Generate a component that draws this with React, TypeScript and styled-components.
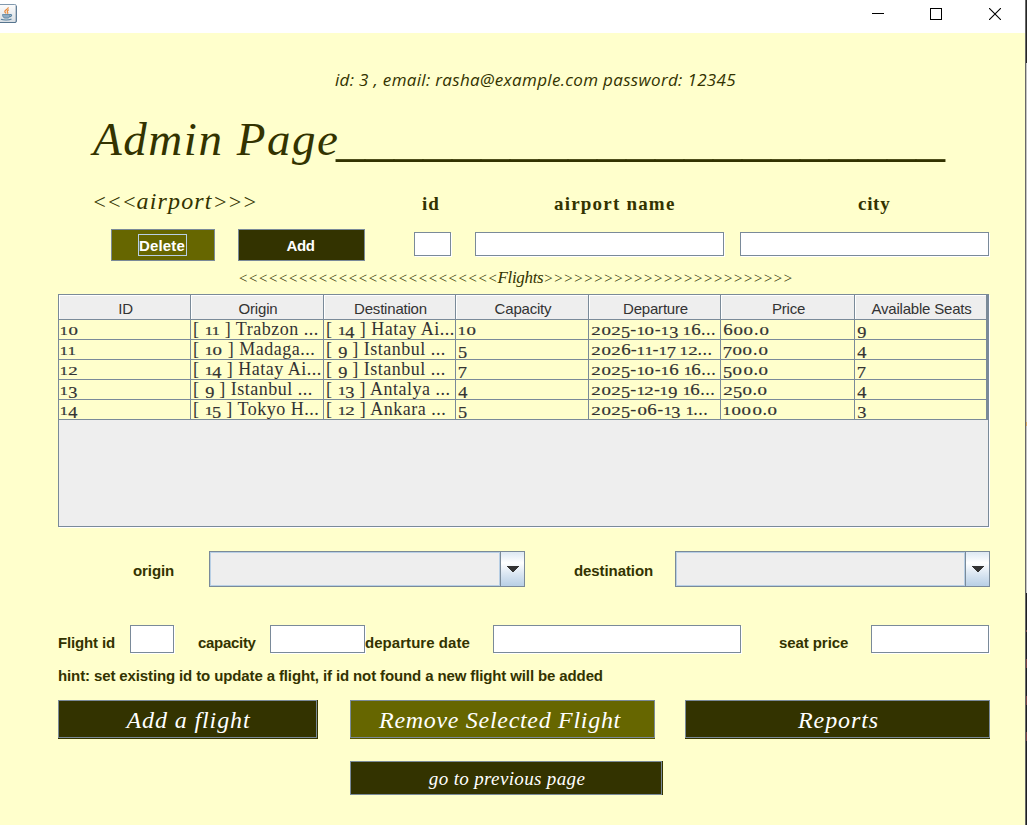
import React from "react";
import styled, { createGlobalStyle } from "styled-components";

const line = "#7a8a99";
const ink = "#333300";
const cream = "#ffffcc";
const serif = '"Liberation Serif", serif';
const sans = '"Liberation Sans", sans-serif';

const GlobalStyle = createGlobalStyle`
  * { box-sizing: border-box; }
  body { margin: 0; background: ${cream}; overflow: hidden; }
`;

const Screen = styled.div`
  display: flex;
  width: 1027px;
  height: 825px;
`;

const Window = styled.div`
  width: 1025px;
  background: ${cream};
  color: ${ink};
  font-family: ${serif};
  display: flex;
  flex-direction: column;
`;

const Backdrop = styled.div`
  width: 2px;
  border-left: 1px solid #686868;
  background: linear-gradient(
    #262626 0 63px, #c4c4c4 63px 422px, #d8a860 422px 426px, #c4c4c4 426px 593px,
    #1e1f22 593px 630px, #7a4040 630px 632px, #1e1f22 632px 659px, #7a4040 659px 668px,
    #1e1f22 668px 696px, #7a4040 696px 705px, #1e1f22 705px 732px, #7a4040 732px 741px, #1e1f22 741px
  );
`;

const TitleBar = styled.header`
  display: flex;
  align-items: flex-start;
  justify-content: space-between;
  height: 33px;
  flex: none;
  background: #fff;
`;

const WindowControls = styled.div`
  display: flex;
  gap: 46px;
  padding: 8px 24px 0 0;

  svg:last-child { margin-left: 1px; }
`;

const AppIcon = styled.svg`
  margin-top: 4px;
`;

const Row = styled.div<{ $h: number; $mt?: number; $pt?: number }>`
  display: flex;
  align-items: center;
  flex: none;
  height: ${(p) => p.$h}px;
  margin-top: ${(p) => p.$mt ?? 0}px;
  padding-top: ${(p) => p.$pt ?? 0}px;
`;

const UserInfo = styled.p`
  margin: 0 0 0 335px;
  font: italic 17px/20px "Open Sans", sans-serif;
  letter-spacing: 0.33px;
  white-space: pre;
`;

const Title = styled.h1`
  margin: 0 0 0 93px;
  font: italic 47px/50px ${serif};
  letter-spacing: 1.55px;
  white-space: pre;
`;

const Rule = styled.span`
  font-size: 58px;
  line-height: 0;
  letter-spacing: 0;
  margin-left: -3.5px;
`;

const AirportTitle = styled.h2`
  width: 329px;
  padding-left: 92px;
  margin: 0 0 2px;
  font: italic 24px/28px ${serif};
  letter-spacing: 1.15px;
  white-space: pre;
`;

const Arrows = styled.span<{ $size: number; $spacing: number }>`
  font-size: ${(p) => p.$size}px;
  letter-spacing: ${(p) => p.$spacing}px;
`;

const ColumnLabel = styled.label<{ $w: number; $ls: number }>`
  width: ${(p) => p.$w}px;
  padding-top: 3px;
  font: bold 19px/24px ${serif};
  letter-spacing: ${(p) => p.$ls}px;
  white-space: nowrap;
`;

const ColumnSpacer = styled.span`
  width: 93px;
`;

const SmallButton = styled.button<{ $w: number; $ml: number; $active?: boolean }>`
  width: ${(p) => p.$w}px;
  height: 32px;
  margin: 0 0 0 ${(p) => p.$ml}px;
  padding: ${(p) => (p.$active ? 0 : 2)}px 2px 0 0;
  border: 1px solid ${line};
  background: ${(p) => (p.$active ? "#666600" : ink)};
  color: #fff;
  font: bold 15px/20px ${sans};
  letter-spacing: ${(p) => (p.$active ? 0.2 : -0.4)}px;
`;

const FocusRing = styled.span`
  display: inline-block;
  width: 49px;
  height: 22px;
  padding-top: 1px;
  border: 1px solid #b8cfe5;
  white-space: nowrap;
`;

const Field = styled.input<{ $w: number; $h: number; $ml: number }>`
  width: ${(p) => p.$w}px;
  height: ${(p) => p.$h}px;
  flex: none;
  margin: 0 0 ${(p) => (p.$h === 24 ? 2 : 0)}px ${(p) => p.$ml}px;
  padding: 0 2px;
  border: 1px solid ${line};
  border-radius: 0;
  background: #fff;
  box-shadow: 1px 1px 0 #fff;
`;

const FlightsTitle = styled.h2`
  margin: 0 0 0 238px;
  font: italic 17px/20px ${serif};
  letter-spacing: -0.35px;
  white-space: pre;
`;

const TablePane = styled.div`
  width: 931px;
  height: 233px;
  flex: none;
  margin-left: 58px;
  border: 1px solid ${line};
  background: #eee;
  box-shadow: 1px 1px 0 #fff;
`;

const Grid = styled.div`
  display: grid;
  grid-template-columns: 132px 133px 132px 133px 132px 134px 132px;
  width: 929px;
  border-right: 1px solid ${line};
`;

const HeadCell = styled.div`
  height: 25px;
  border-right: 1px solid ${line};
  border-bottom: 1px solid ${line};
  box-shadow: inset 1px 1px 0 #fff;
  padding: 5px 0 0 2px;
  text-align: center;
  color: #333;
  font: 15px/18px ${sans};
  letter-spacing: -0.2px;
`;

const Cell = styled.div<{ $first?: boolean }>`
  height: 20px;
  padding-left: ${(p) => (p.$first ? 1 : 2)}px;
  border-right: 1px solid ${line};
  border-bottom: 1px solid ${line};
  background: ${cream};
  color: #333;
  font: 18px/19px ${serif};
  letter-spacing: 0.5px;
  white-space: pre;
`;

const Numeral = styled.span<{ $w: number; $size: number; $drop: number; $stretch: number }>`
  display: inline-block;
  width: ${(p) => p.$w}px;
  font-size: ${(p) => p.$size}px;
  line-height: 1;
  letter-spacing: 0;
  text-align: center;
  transform: translateY(${(p) => p.$drop}px) scaleX(${(p) => p.$stretch});
  -webkit-text-stroke: 0.2px #333;
`;

const FormLabel = styled.label<{ $ml: number; $w: number; $ls?: number; $pt?: number }>`
  width: ${(p) => p.$w}px;
  flex: none;
  margin-left: ${(p) => p.$ml}px;
  padding-top: ${(p) => p.$pt ?? 7}px;
  font: bold 15px/18px ${sans};
  letter-spacing: ${(p) => p.$ls ?? -0.08}px;
  white-space: nowrap;
`;

const Combo = styled.div<{ $w: number }>`
  display: flex;
  width: ${(p) => p.$w}px;
  height: 36px;
  flex: none;
  border: 1px solid ${line};
`;

const ComboValue = styled.div`
  flex: 1;
  border: 1px solid #b8cfe5;
  background: #eee;
`;

const ComboArrow = styled.div`
  display: flex;
  align-items: center;
  justify-content: center;
  width: 24px;
  border-left: 1px solid ${line};
  background: linear-gradient(#dde8f3 0%, #fff 32%, #dde8f3 62%, #b8cfe5 100%);
`;

const Hint = styled.p`
  margin: 0 0 2px 58px;
  font: bold 15px/18px ${sans};
  letter-spacing: -0.12px;
  white-space: nowrap;
`;

const ActionButton = styled.button<{
  $w: number; $h: number; $ml: number; $size: number; $ls: number; $active?: boolean;
  $right?: boolean; $bottom?: boolean; $shift?: number;
}>`
  width: ${(p) => p.$w}px;
  height: ${(p) => p.$h}px;
  flex: none;
  margin: 0 0 0 ${(p) => p.$ml}px;
  padding: 2px ${(p) => Math.max(0, -(p.$shift ?? 2))}px 0 ${(p) => Math.max(0, p.$shift ?? 2)}px;
  border: 1px solid ${line};
  background: ${(p) => (p.$active ? "#666600" : ink)};
  box-shadow:
    ${(p) => (p.$right ? 1 : 0)}px 0 0 ${(p) => (p.$active ? "#555500" : ink)},
    ${(p) => (p.$right ? 1 : 0)}px ${(p) => (p.$bottom ? 1 : 0)}px 0 ${(p) => (p.$active ? "#555500" : ink)},
    0 ${(p) => (p.$bottom ? 1 : 0)}px 0 ${(p) => (p.$active ? "#555500" : ink)};
  color: #fff;
  font: italic ${(p) => p.$size}px/28px ${serif};
  letter-spacing: ${(p) => p.$ls}px;
  white-space: nowrap;
`;

const digitWidths: Record<string, number> = {
  "0": 10.6, "1": 7.6, "2": 9.7, "3": 9.5, "4": 9.7, "5": 9.2, "6": 9.9, "7": 8.7, "8": 10, "9": 9.7,
};

/* Renders digits as old-style figures: 0-2 at x-height, 3/4/5/7/9 descending. */
function OldStyle({ text }: { text: string }) {
  return (
    <>
      {text.split(/(\d)/).map((part, i) => {
        if (!(part in digitWidths)) return part;
        const small = "012".includes(part);
        const descends = "34579".includes(part);
        return (
          <Numeral
            key={i}
            $w={digitWidths[part]}
            $size={small ? 13 : descends ? 17 : 17.5}
            $drop={descends ? 2.5 : 0}
            $stretch={part === "1" ? 1.25 : small ? 1.45 : 1.08}
          >
            {part}
          </Numeral>
        );
      })}
    </>
  );
}

const headers = ["ID", "Origin", "Destination", "Capacity", "Departure", "Price", "Available Seats"];
const flights = [
  ["10", "[ 11 ] Trabzon ...", "[ 14 ] Hatay Ai...", "10", "2025-10-13 16...", "600.0", "9"],
  ["11", "[ 10 ] Madaga...", "[ 9 ] Istanbul ...", "5", "2026-11-17 12...", "700.0", "4"],
  ["12", "[ 14 ] Hatay Ai...", "[ 9 ] Istanbul ...", "7", "2025-10-16 16...", "500.0", "7"],
  ["13", "[ 9 ] Istanbul ...", "[ 13 ] Antalya ...", "4", "2025-12-19 16...", "250.0", "4"],
  ["14", "[ 15 ] Tokyo H...", "[ 12 ] Ankara ...", "5", "2025-06-13 1...", "1000.0", "3"],
];

function JavaIcon() {
  return (
    <AppIcon width="17" height="19" viewBox="0 0 17 19">
      <defs>
        <linearGradient id="tile" x1="0" y1="0" x2="0" y2="1">
          <stop offset="0" stopColor="#fdfdfd" />
          <stop offset="1" stopColor="#d8dde2" />
        </linearGradient>
      </defs>
      <rect x="-3" y="0.5" width="19.3" height="18" rx="1.5" fill="url(#tile)" stroke="#8199ae" />
      <path d="M16.3 2v15.500q0 1-1 1H0" fill="none" stroke="#55748e" />
      <path d="M8.200 3.200c.6 1.800-3.400 2.600-3.400 4.300 0 .9.900 1.400 1.300 2M8.900 5.800c-1.600.6-2 1.500-1.300 2.500.4.600.3 1-.1 1.500" fill="none" stroke="#e88a3a" strokeWidth="1.200" />
      <path d="M2.500 10.500h7.500c0 1.800-.8 3.600-2 3.600H5c-1.500 0-2.500-1.800-2.500-3.600z" fill="#8fabc2" stroke="#55809f" strokeWidth="0.800" />
      <path d="M10 10.600c2.200-.4 2.300 1.500-.3 2.300M1 15.300c2.500 1.100 8.200 1 10.500-.2" fill="none" stroke="#55809f" strokeWidth="1.100" />
    </AppIcon>
  );
}

function Select({ width }: { width: number }) {
  return (
    <Combo $w={width}>
      <ComboValue />
      <ComboArrow>
        <svg width="13" height="7" viewBox="0 0 13 7" shapeRendering="crispEdges">
          <path d="M0 0h13l-6.500 6.500z" fill="#333" />
        </svg>
      </ComboArrow>
    </Combo>
  );
}

export default function App() {
  return (
    <Screen>
      <GlobalStyle />
      <Window>
        <TitleBar>
          <JavaIcon />
          <WindowControls>
            <svg width="12" height="12" shapeRendering="crispEdges"><path d="M0 5.500h12" stroke="#000" /></svg>
            <svg width="12" height="12"><rect x="0.5" y="0.5" width="11" height="11" fill="none" stroke="#000" /></svg>
            <svg width="12" height="12"><path d="M0 0l12 12M12 0L0 12" stroke="#000" strokeWidth="1.1" /></svg>
          </WindowControls>
        </TitleBar>

        <Row $h={77} $pt={16}>
          <UserInfo>id: 3 , email: rasha@example.com password: 12345</UserInfo>
        </Row>
        <Row $h={58}>
          <Title>Admin Page<Rule>_____________________</Rule></Title>
        </Row>

        <Row $h={61} $pt={7}>
          <AirportTitle>
            <Arrows $size={22} $spacing={0}>{"<<<"}</Arrows>airport<Arrows $size={22} $spacing={0}>{">>>"}</Arrows>
          </AirportTitle>
          <ColumnSpacer />
          <ColumnLabel $w={132} $ls={1}>id</ColumnLabel>
          <ColumnLabel $w={304} $ls={1.2}>airport name</ColumnLabel>
          <ColumnLabel $w={60} $ls={0.7}>city</ColumnLabel>
        </Row>
        <Row $h={32}>
          <SmallButton $w={104} $ml={111} $active><FocusRing>Delete</FocusRing></SmallButton>
          <SmallButton $w={127} $ml={23}>Add</SmallButton>
          <Field $w={37} $h={24} $ml={49} />
          <Field $w={249} $h={24} $ml={24} />
          <Field $w={249} $h={24} $ml={16} />
        </Row>

        <Row $h={33}>
          <FlightsTitle>
            <Arrows $size={15} $spacing={-0.14}>{"<".repeat(26)}</Arrows>Flights<Arrows $size={15} $spacing={-0.14}>{">".repeat(25)}</Arrows>
          </FlightsTitle>
        </Row>
        <TablePane>
          <Grid>
            {headers.map((h) => <HeadCell key={h}>{h}</HeadCell>)}
            {flights.map((row) => row.map((value, i) => (
              <Cell key={row[0] + i} $first={i === 0}><OldStyle text={value} /></Cell>
            )))}
          </Grid>
        </TablePane>

        <Row $h={36} $mt={24}>
          <FormLabel $ml={133} $w={76} $pt={4}>origin</FormLabel>
          <Select width={316} />
          <FormLabel $ml={49} $w={101} $pt={4}>destination</FormLabel>
          <Select width={315} />
        </Row>
        <Row $h={28} $mt={38}>
          <FormLabel $ml={58} $w={72} $ls={-0.15}>Flight id</FormLabel>
          <Field $w={44} $h={28} $ml={0} />
          <FormLabel $ml={24} $w={72} $ls={-0.3}>capacity</FormLabel>
          <Field $w={95} $h={28} $ml={0} />
          <FormLabel $ml={0} $w={128} $ls={0.05}>departure date</FormLabel>
          <Field $w={248} $h={28} $ml={0} />
          <FormLabel $ml={38} $w={92}>seat price</FormLabel>
          <Field $w={118} $h={28} $ml={0} />
        </Row>
        <Row $h={47}>
          <Hint>hint: set existing id to update a flight, if id not found a new flight will be added</Hint>
        </Row>

        <Row $h={38}>
          <ActionButton $w={259} $h={38} $ml={58} $size={24} $ls={0.89} $right $bottom>Add a flight</ActionButton>
          <ActionButton $w={305} $h={38} $ml={33} $size={24} $ls={0.7} $bottom $active $shift={-5}>Remove Selected Flight</ActionButton>
          <ActionButton $w={305} $h={38} $ml={30} $size={24} $ls={0.9} $bottom>Reports</ActionButton>
        </Row>
        <Row $h={34} $mt={23}>
          <ActionButton $w={312} $h={34} $ml={350} $size={19} $ls={0.35} $right>go to previous page</ActionButton>
        </Row>
      </Window>
      <Backdrop />
    </Screen>
  );
}
